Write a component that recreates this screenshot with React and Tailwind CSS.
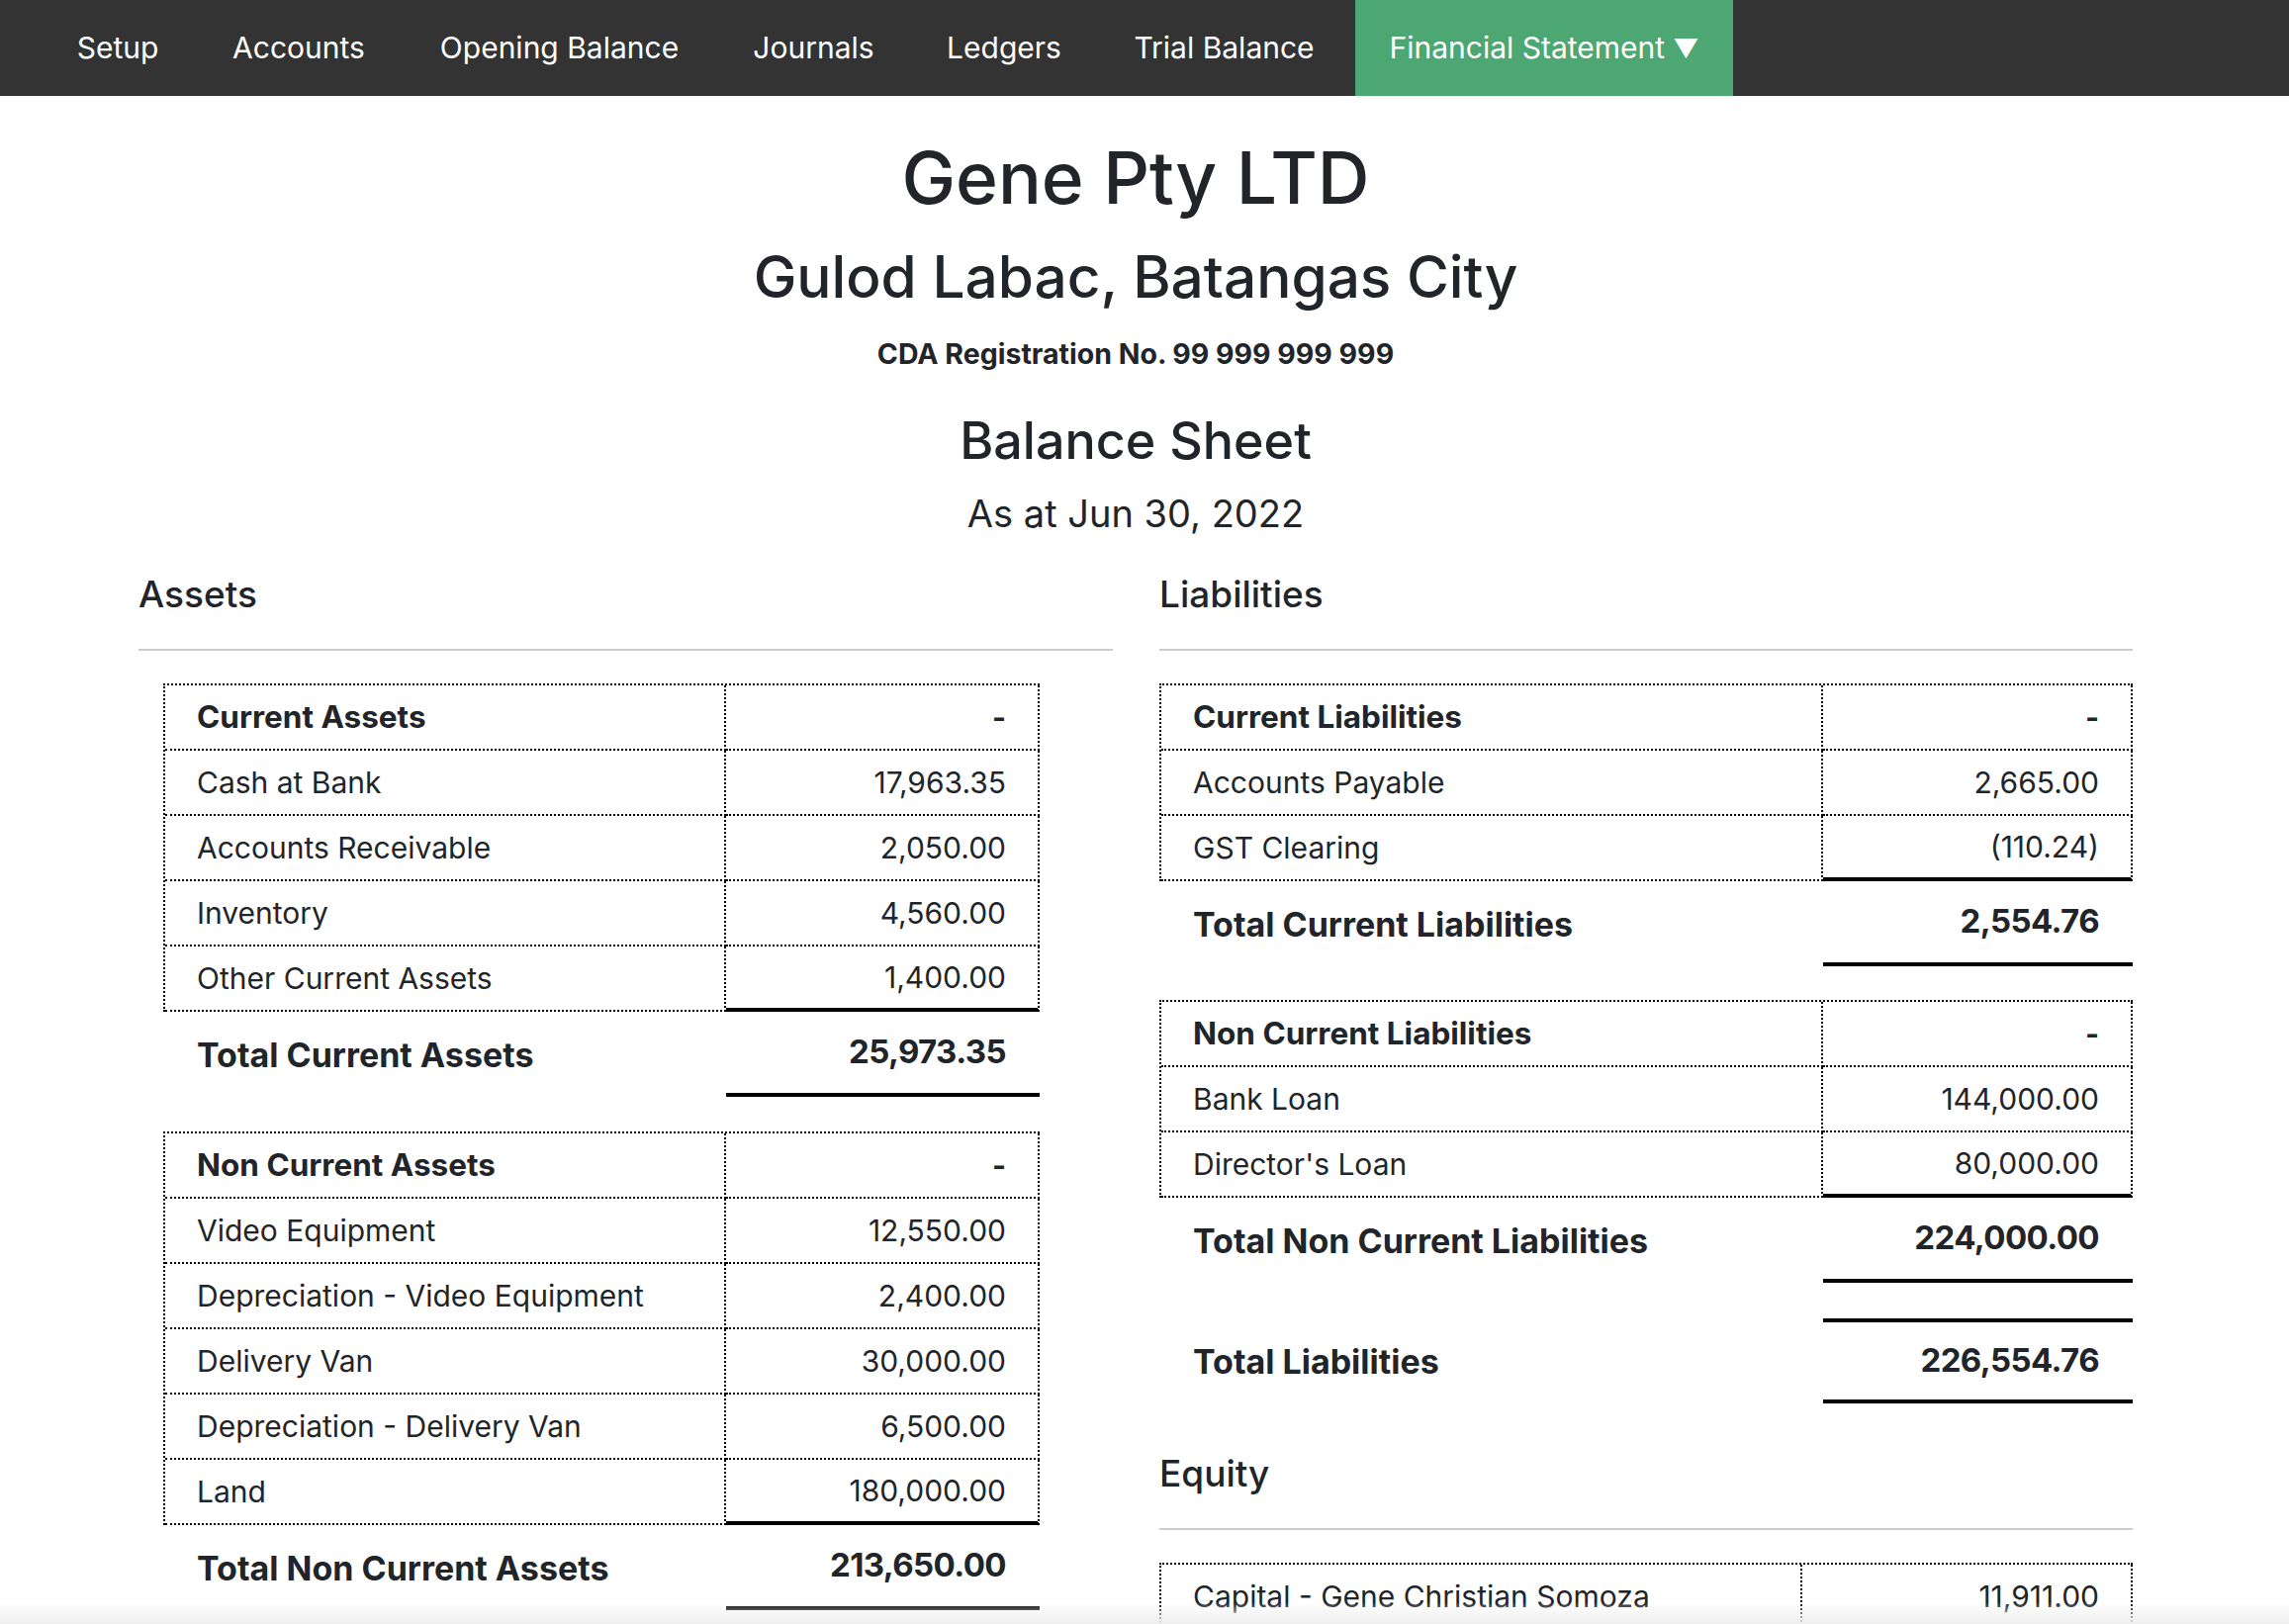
import React from "react";

const navItems = [
  { label: "Setup", w: "w-[148px]" },
  { label: "Accounts", w: "w-[198px]" },
  { label: "Opening Balance", w: "w-[309px]" },
  { label: "Journals", w: "w-[185px]" },
  { label: "Ledgers", w: "w-[180px]" },
  { label: "Trial Balance", w: "w-[245px]" },
];

function Heading({ children, className = "" }) {
  return (
    <div className={`h-[45px] text-[37px] leading-[45px] ${className}`}>{children}</div>
  );
}

function Rule() {
  return <div className="mt-[33px] h-[2px] bg-[#cccccc]" />;
}

function Table({ rows, leftW, rightW, className = "", lastThick = true }) {
  return (
    <div className={`border-t-2 border-l-2 border-dotted border-black ${className}`}>
      {rows.map((r, i) => {
        const last = i === rows.length - 1;
        return (
          <div key={i} className="flex h-[66px]">
            <div
              className={`${leftW} shrink-0 flex items-center pl-[32px] border-r-2 border-b-2 border-dotted border-black ${
                r.bold ? "font-bold text-[31.5px]" : ""
              }`}
            >
              {r.label}
            </div>
            <div
              className={`${rightW} shrink-0 flex items-center justify-end pr-[32px] border-r-2 border-black ${
                last && lastThick ? "border-b-4" : "border-b-2 border-dotted"
              } ${r.bold ? "font-bold" : ""}`}
              style={last && lastThick ? { borderRightStyle: "dotted", borderBottomStyle: "solid" } : undefined}
            >
              {r.value}
            </div>
          </div>
        );
      })}
    </div>
  );
}

function TotalRow({ label, value, leftW, rightW, top = false, className = "" }) {
  return (
    <div className={`flex h-[86px] font-bold ${className}`}>
      <div className={`${leftW} shrink-0 flex items-center pl-[34px] text-[34px]`}>{label}</div>
      <div
        className={`${rightW} shrink-0 flex items-center justify-end pr-[34px] text-[33px] tracking-[-0.6px] border-b-4 border-solid border-black ${
          top ? "border-t-4" : ""
        }`}
      >
        {value}
      </div>
    </div>
  );
}

export default function App() {
  return (
    <div className="min-h-screen bg-white text-[#212529] font-['Inter','Noto_Sans',sans-serif]">
      <nav className="h-[97px] bg-[#333333] flex pl-[45px] gap-[10px]">
        {navItems.map((n) => (
          <div
            key={n.label}
            className={`${n.w} h-full flex items-center justify-center text-[30px] text-white`}
          >
            {n.label}
          </div>
        ))}
        <div className="w-[382px] h-full flex items-center justify-center text-[30px] text-white bg-[#4ca773]">
          Financial Statement <span className="ml-[8px] text-[26px]">▼</span>
        </div>
      </nav>

      <div className="ml-[140px] w-[2016px] pb-[200px]">
        <div className="text-center">
          <div className="mt-[38px] h-[90px] text-[73px] leading-[90px] font-medium">Gene Pty LTD</div>
          <div className="mt-[19px] h-[72px] text-[58.5px] leading-[72px] font-medium">
            Gulod Labac, Batangas City
          </div>
          <div className="mt-[24px] h-[36px] text-[28.5px] leading-[36px] font-bold">
            CDA Registration No. 99 999 999 999
          </div>
          <div className="mt-[39px] h-[62px] text-[52px] leading-[62px] font-medium">Balance Sheet</div>
          <div className="mt-[20px] h-[45px] text-[38px] leading-[45px]">As at Jun 30, 2022</div>
        </div>

        <div className="mt-[36px] flex gap-[47px] text-[30px]">
          {/* Assets */}
          <div className="w-[985px] shrink-0">
            <Heading className="font-medium">Assets</Heading>
            <Rule />
            <div className="ml-[25px] w-[886px]">
              <Table
                className="mt-[33px]"
                leftW="w-[567px]"
                rightW="w-[317px]"
                rows={[
                  { label: "Current Assets", value: "-", bold: true },
                  { label: "Cash at Bank", value: "17,963.35" },
                  { label: "Accounts Receivable", value: "2,050.00" },
                  { label: "Inventory", value: "4,560.00" },
                  { label: "Other Current Assets", value: "1,400.00" },
                ]}
              />
              <TotalRow
                label="Total Current Assets"
                value="25,973.35"
                leftW="w-[569px]"
                rightW="w-[317px]"
              />
              <Table
                className="mt-[35px]"
                leftW="w-[567px]"
                rightW="w-[317px]"
                rows={[
                  { label: "Non Current Assets", value: "-", bold: true },
                  { label: "Video Equipment", value: "12,550.00" },
                  { label: "Depreciation - Video Equipment", value: "2,400.00" },
                  { label: "Delivery Van", value: "30,000.00" },
                  { label: "Depreciation - Delivery Van", value: "6,500.00" },
                  { label: "Land", value: "180,000.00" },
                ]}
              />
              <TotalRow
                label="Total Non Current Assets"
                value="213,650.00"
                leftW="w-[569px]"
                rightW="w-[317px]"
              />
            </div>
          </div>

          {/* Liabilities */}
          <div className="w-[984px] shrink-0">
            <Heading className="font-medium">Liabilities</Heading>
            <Rule />
            <Table
              className="mt-[33px]"
              leftW="w-[669px]"
              rightW="w-[313px]"
              rows={[
                { label: "Current Liabilities", value: "-", bold: true },
                { label: "Accounts Payable", value: "2,665.00" },
                { label: "GST Clearing", value: "(110.24)" },
              ]}
            />
            <TotalRow
              label="Total Current Liabilities"
              value="2,554.76"
              leftW="w-[671px]"
              rightW="w-[313px]"
            />
            <Table
              className="mt-[34px]"
              leftW="w-[669px]"
              rightW="w-[313px]"
              rows={[
                { label: "Non Current Liabilities", value: "-", bold: true },
                { label: "Bank Loan", value: "144,000.00" },
                { label: "Director's Loan", value: "80,000.00" },
              ]}
            />
            <TotalRow
              label="Total Non Current Liabilities"
              value="224,000.00"
              leftW="w-[671px]"
              rightW="w-[313px]"
            />
            <TotalRow
              className="mt-[36px]"
              top
              label="Total Liabilities"
              value="226,554.76"
              leftW="w-[671px]"
              rightW="w-[313px]"
            />

            <Heading className="mt-[48px] font-medium">Equity</Heading>
            <Rule />
            <Table
              className="mt-[33px]"
              leftW="w-[648px]"
              rightW="w-[334px]"
              lastThick={false}
              rows={[{ label: "Capital - Gene Christian Somoza", value: "11,911.00" }]}
            />
          </div>
        </div>
      </div>

      <div className="pointer-events-none fixed bottom-0 left-0 right-0 h-[22px] bg-linear-to-b from-transparent to-[#eeeeee]" />
    </div>
  );
}
